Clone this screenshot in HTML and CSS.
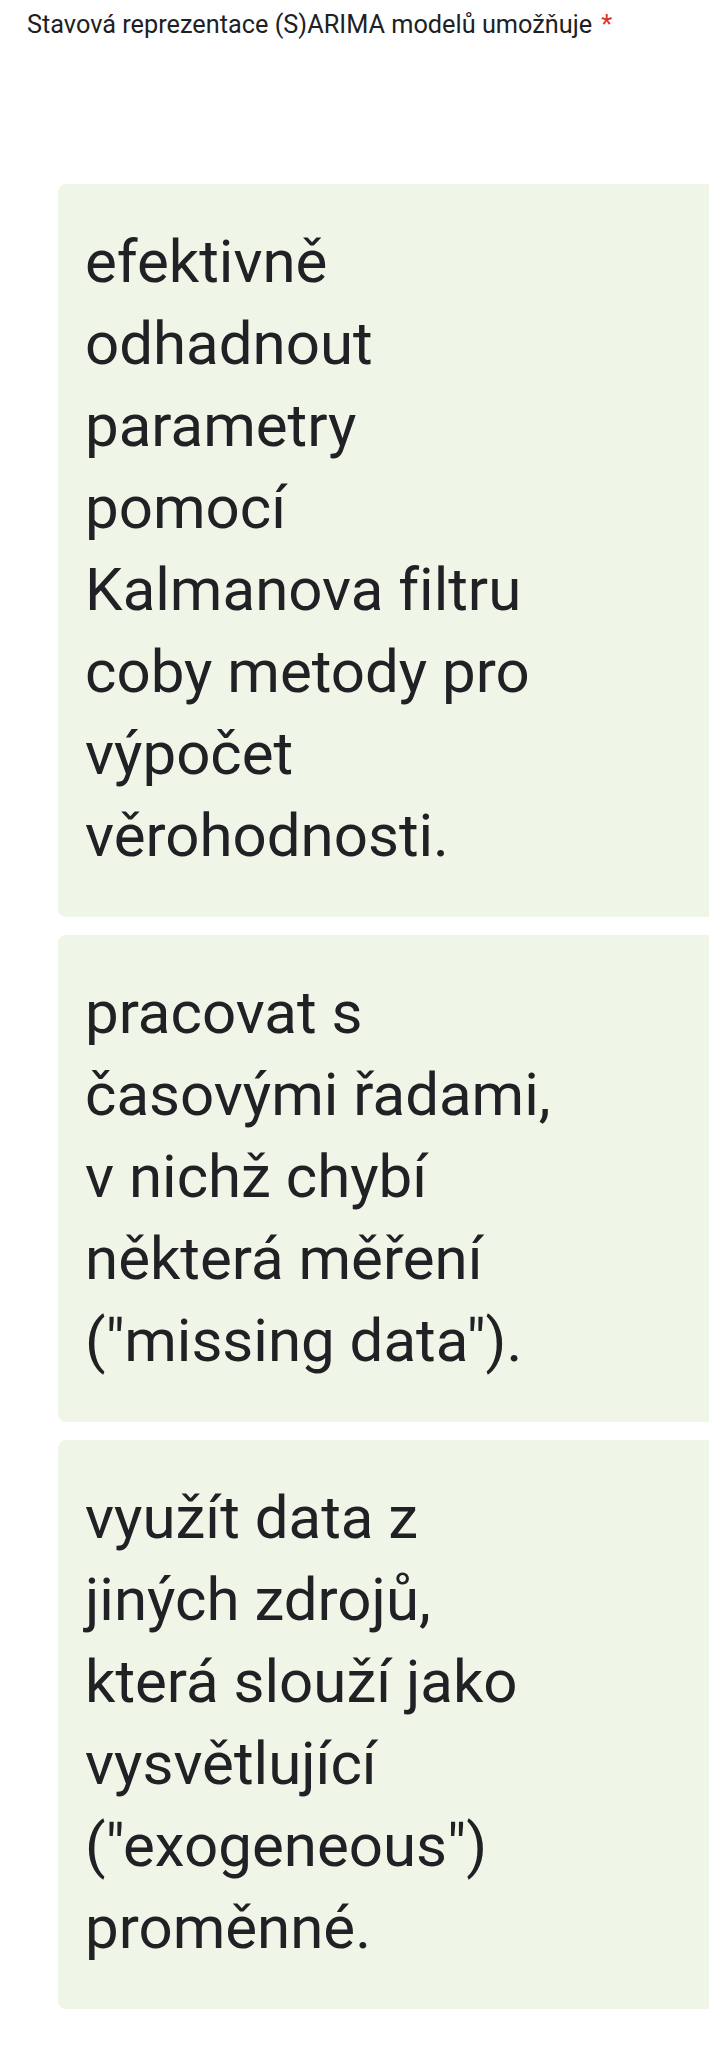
FILE: index.html
```html
<!DOCTYPE html>
<html lang="cs">
<head>
<meta charset="utf-8">
<title>Stavová reprezentace (S)ARIMA modelů</title>
<link rel="stylesheet" href="styles.css">
</head>
<body>
<main class="page">
  <h1 class="question">Stavová reprezentace (S)ARIMA modelů umožňuje<span class="req">*</span></h1>
  <ul class="options">
    <li class="option"><span class="option-text">efektivně odhadnout parametry pomocí Kalmanova filtru coby metody pro výpočet věrohodnosti.</span></li>
    <li class="option"><span class="option-text">pracovat s časovými řadami, v nichž chybí některá měření ("missing data").</span></li>
    <li class="option"><span class="option-text">využít data z jiných zdrojů, která slouží jako vysvětlující ("exogeneous") proměnné.</span></li>
  </ul>
</main>
</body>
</html>
```
FILE: styles.css
```css
html, body {
  margin: 0;
  padding: 0;
  background: #ffffff;
}

body {
  font-family: Roboto, "Liberation Sans", sans-serif;
  color: #202124;
  overflow-x: hidden;
  font-variant-ligatures: none;
}

.page {
  width: 709px;
  overflow: hidden;
}

.question {
  margin: 0;
  padding: 10px 0 0 27px;
  font-size: 25.3px;
  line-height: 29px;
  font-weight: 400;
  color: #202124;
}

.req {
  color: #d93025;
  margin-left: 9px;
}

.options {
  list-style: none;
  margin: 0;
  padding: 145px 0 0 58px;
  display: flex;
  flex-direction: column;
  gap: 18px;
}

.option {
  width: 720px;
  box-sizing: border-box;
  background: #eff5e7;
  border-radius: 8px;
  padding: 37px 0 40px 27px;
}

.option-text {
  display: block;
  width: 478px;
  font-size: 60px;
  line-height: 82px;
  color: #202124;
  font-variant-ligatures: none;
}
```
